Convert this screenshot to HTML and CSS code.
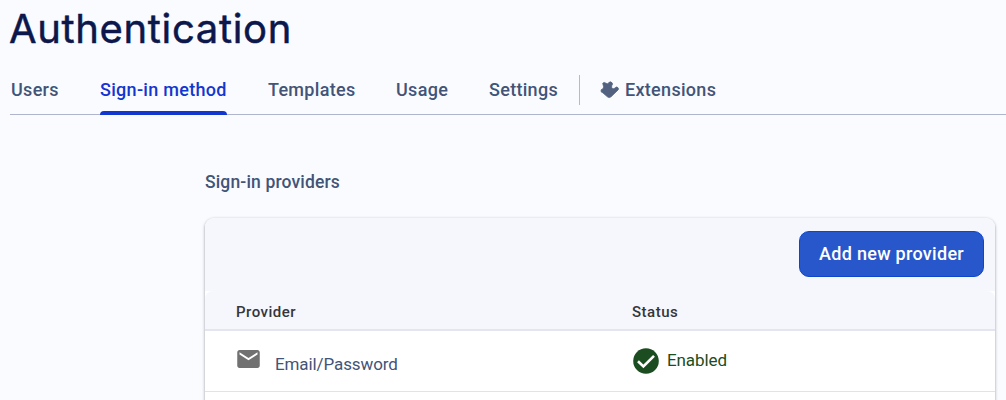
FILE: index.html
```html
<!DOCTYPE html>
<html lang="en">
<head>
<meta charset="utf-8">
<title>Authentication</title>
<link rel="stylesheet" href="styles.css">
</head>
<body>
<h1 class="title">Authentication</h1>
<nav class="tabs">
  <a class="tab users">Users</a>
  <a class="tab active">Sign-in method</a>
  <a class="tab templates">Templates</a>
  <a class="tab usage">Usage</a>
  <a class="tab settings">Settings</a>
  <span class="divider"></span>
  <a class="tab extensions"><svg class="ext-icon" viewBox="0 0 20 20" width="20" height="20"><path d="M3 4.500 Q2.200 3.500 3.300 2.800 Q4.500 2 5.500 3 Q7.500 4.800 8.800 2.700 Q10.200 1 12 2.700 Q13.200 4 11.800 5.500 Q11 7.500 12.500 8.500 Q14 9.300 15.200 7.800 Q16.600 6.200 18 7.700 Q19 9 18 10 L11 16.800 Q9.200 18.300 7.400 16.800 L2.800 12.800 Q1.200 12.500 1 11 Q.8 9.200 2.800 9 Q4.500 7 3 4.500 Z"/></svg><span>Extensions</span></a>
</nav>
<main class="content">
  <h2 class="section">Sign-in providers</h2>
  <section class="card">
    <div class="toolbar"><button class="add">Add new provider</button></div>
    <div class="row head"><div class="provider">Provider</div><div class="status">Status</div></div>
    <div class="row item">
      <div class="provider"><svg class="mail" viewBox="2 4 20 16" width="23" height="18"><path d="M20 4H4c-1.1 0-1.99.9-1.99 2L2 18c0 1.1.9 2 2 2h16c1.1 0 2-.9 2-2V6c0-1.100-.9-2-2-2zm0 4l-8 5-8-5V6l8 5 8-5v2z"/></svg><span class="name">Email/Password</span></div>
      <div class="status"><svg class="check" viewBox="0 0 26 26" width="26" height="26"><circle cx="13" cy="13" r="12.800"/><path d="M5 13.200L10.400 18.400L21 7.800"/></svg><span class="enabled">Enabled</span></div>
    </div>
    <div class="rest"></div>
  </section>
</main>
</body>
</html>
```
FILE: styles.css
```css
* { box-sizing: border-box; }
body { margin: 0; height: 400px; overflow: hidden; background: #fafbff; font-family: Roboto, "Liberation Sans", sans-serif; color: #425478; }
.title { margin: 0; padding: 3px 0 0 9px; height: 65px; font: 400 40px/52px Inter, sans-serif; letter-spacing: .65px; color: #0c174b; -webkit-text-stroke: .5px #0c174b; white-space: nowrap; }
.tabs { display: flex; height: 50px; margin-left: 10px; border-bottom: 1px solid #b1b5cb; font-weight: 500; font-size: 18px; line-height: 50px; letter-spacing: .3px; white-space: nowrap; }
.tab { display: block; height: 50px; }
.users { width: 90px; padding-left: 1px; }
.active { position: relative; width: 127px; color: #1237cf; }
.active::after { content: ""; position: absolute; left: 0; right: 0; bottom: 0; height: 4px; border-radius: 4px 4px 0 0; background: #1237cf; }
.templates { margin-left: 41px; width: 128px; }
.usage { width: 93px; }
.settings { width: 90px; }
.divider { width: 1px; height: 30px; margin-top: 10px; background: #b6b9c6; }
.extensions { display: flex; align-items: center; margin-left: 20px; gap: 5px; }
.ext-icon { fill: #526180; stroke: #526180; stroke-width: .8; }
.content { margin-left: 205px; width: 790px; }
.section { margin: 0; height: 103px; padding-top: 55px; font-weight: 500; font-size: 17.500px; line-height: 24px; letter-spacing: .15px; }
.card { height: 190px; border-radius: 9px 9px 0 0; overflow: hidden; background: #fff; box-shadow: 0 1px 3px rgba(40,45,60,.5); }
.toolbar { display: flex; justify-content: flex-end; height: 73px; padding: 13px 11px 0 0; background: #f6f7fc; }
.add { width: 185px; height: 46px; padding: 0 0 1px; border: 1px solid #0d45cf; border-radius: 10px; background: #2757cb; color: #fff; font: 500 18px Roboto, sans-serif; letter-spacing: .3px; }
.row { display: flex; padding-left: 31px; }
.head { height: 40px; border-radius: 8px 8px 0 0; border-bottom: 2px solid #e3e5f0; background: #f6f7fc; color: #34363b; font-weight: 500; font-size: 15px; line-height: 42px; letter-spacing: .5px; }
.item { height: 61px; border-bottom: 1px solid #e2e3e9; }
.provider { display: flex; width: 396px; }
.status { display: flex; }
.mail { margin: 19px 0 0 1px; fill: #717171; }
.name { padding: 21px 0 0 15px; font-size: 17px; line-height: 24px; letter-spacing: -.1px; }
.check { margin: 17px 0 0 1px; }
.check circle { fill: #1b4d21; }
.check path { fill: none; stroke: #fff; stroke-width: 2.600; }
.enabled { padding: 17px 0 0 8px; font-size: 17px; line-height: 24px; letter-spacing: -.1px; color: #1b4d21; }
```
